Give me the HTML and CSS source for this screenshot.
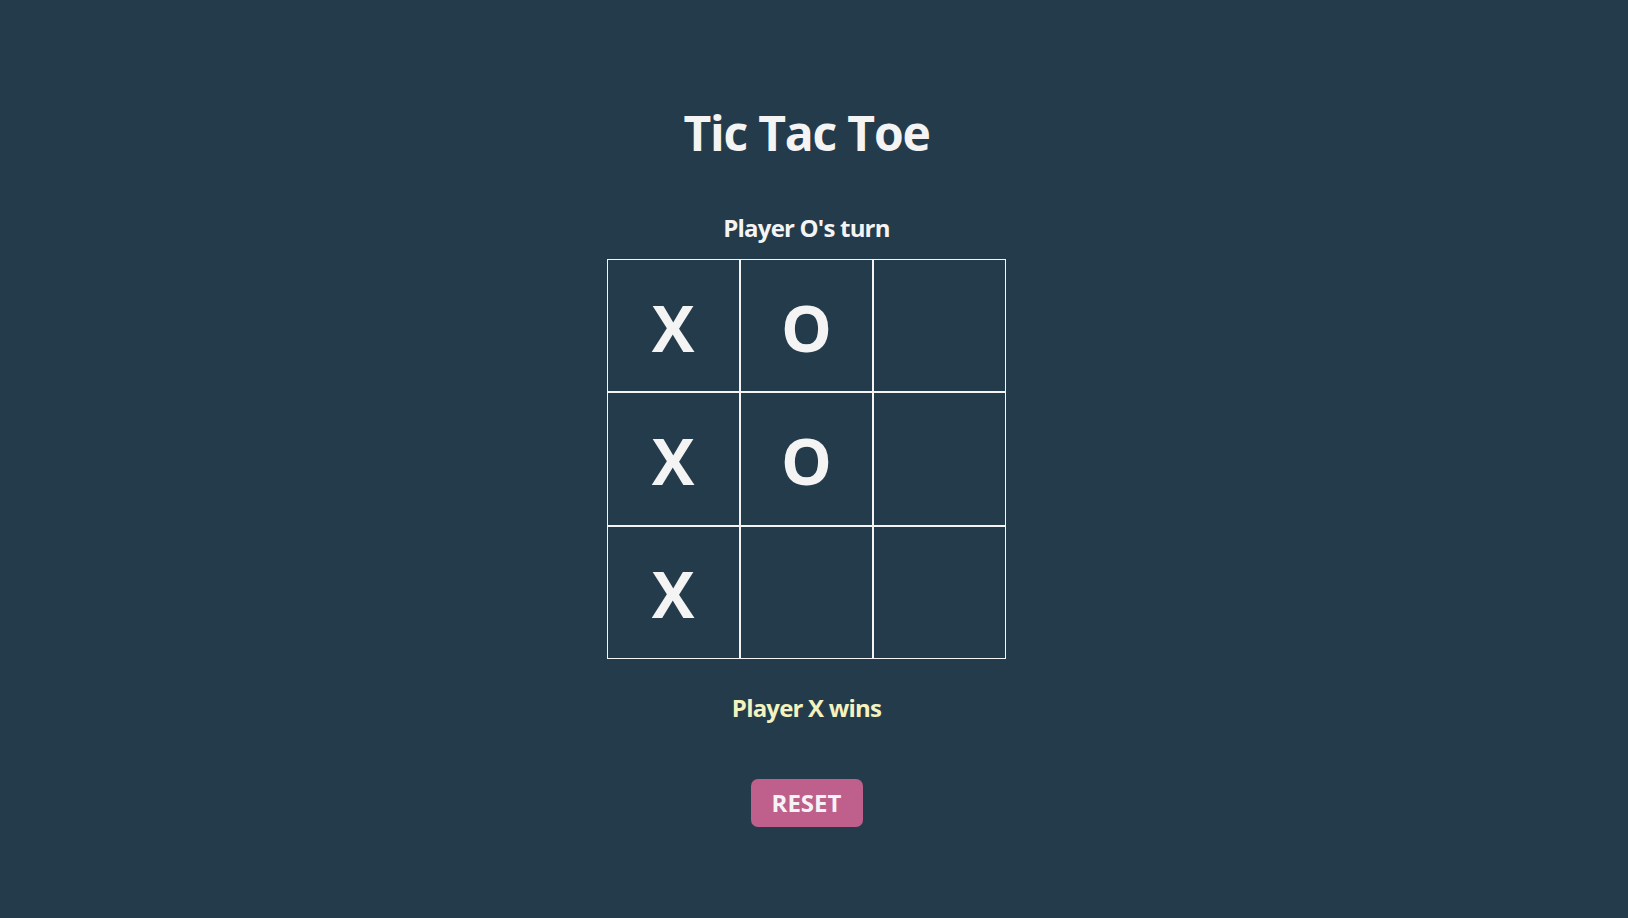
FILE: index.html
```html
<!DOCTYPE html>
<html lang="en">
<head>
<meta charset="utf-8">
<title>Tic Tac Toe</title>
<link rel="stylesheet" href="styles.css">
</head>
<body>
<main class="game">
  <h1 class="title">Tic Tac Toe</h1>
  <p class="status">Player O's turn</p>
  <div class="board">
    <div class="cell">X</div>
    <div class="cell">O</div>
    <div class="cell"></div>
    <div class="cell">X</div>
    <div class="cell">O</div>
    <div class="cell"></div>
    <div class="cell">X</div>
    <div class="cell"></div>
    <div class="cell"></div>
  </div>
  <p class="result">Player X wins</p>
  <button class="reset">RESET</button>
</main>
</body>
</html>
```
FILE: styles.css
```css
html, body {
  margin: 0;
  padding: 0;
  height: 100%;
}
body {
  background: #243b4b;
  color: #f4f4f4;
  font-family: "Open Sans", "Noto Sans", sans-serif;
}
.game {
  display: flex;
  flex-direction: column;
  align-items: center;
  padding-top: 105px;
  padding-right: 15px;
}
.title {
  margin: 0;
  font-size: 48px;
  line-height: 56px;
  font-weight: 700;
  letter-spacing: -1.2px;
}
.status {
  margin: 51px 0 0;
  font-size: 24px;
  line-height: 32px;
  font-weight: 700;
  letter-spacing: -0.8px;
}
.board {
  margin-top: 15px;
  display: grid;
  grid-template-columns: repeat(3, 133.33px);
  grid-template-rows: repeat(3, 133.33px);
}
.cell {
  box-sizing: border-box;
  border: 1px solid #f4f4f4;
  display: flex;
  align-items: center;
  justify-content: center;
  font-size: 64px;
  font-weight: 700;
  line-height: 1;
  padding-top: 4px;
}
.result {
  margin: 33px 0 0;
  font-size: 24px;
  line-height: 32px;
  font-weight: 700;
  letter-spacing: -0.8px;
  color: #f3f3c0;
}
.reset {
  margin-top: 55px;
  box-sizing: border-box;
  width: 112px;
  height: 48px;
  border: none;
  border-radius: 7px;
  background: #bf5f8c;
  color: #f4f4f4;
  font-family: "Open Sans", "Noto Sans", sans-serif;
  font-size: 24px;
  font-weight: 700;
  padding: 0;
}
```
